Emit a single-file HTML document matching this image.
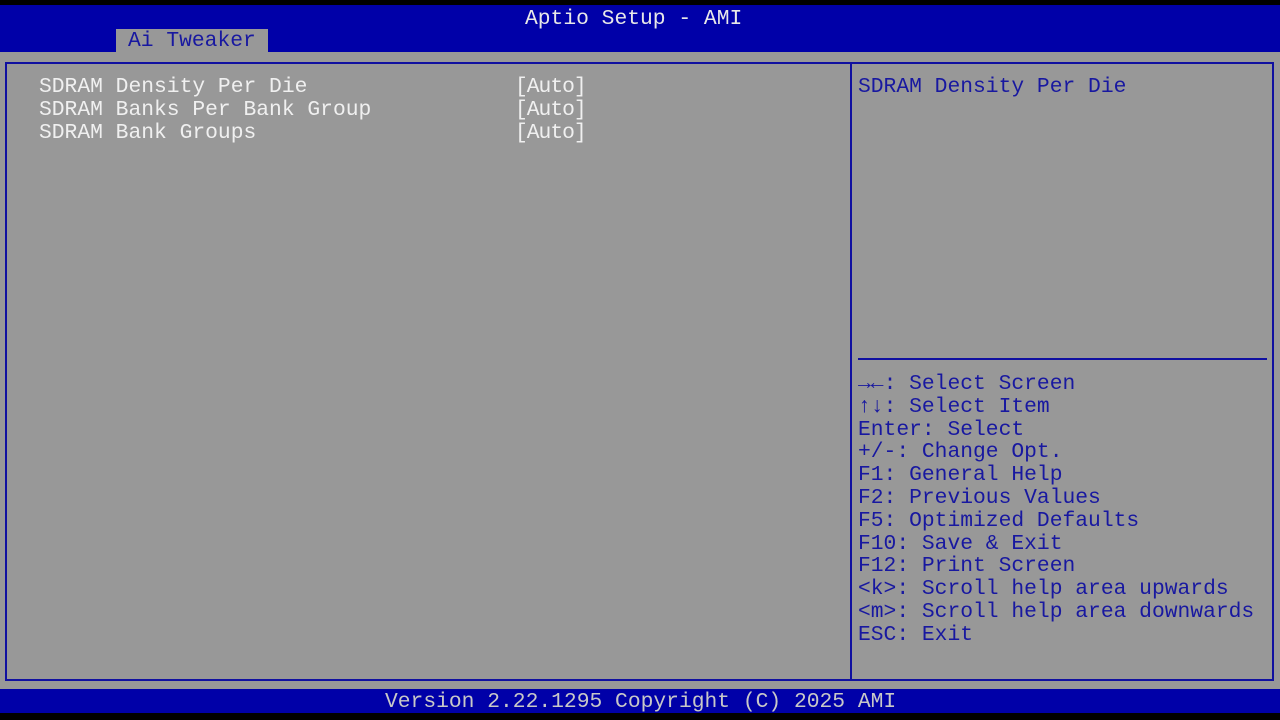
<!DOCTYPE html>
<html><head><style>
body{margin:0;width:1280px;height:720px;background:#989898;position:relative;overflow:hidden;font-family:"Liberation Mono","DejaVu Sans Mono",monospace;font-size:21.3px;}
div{position:absolute;}
.t{white-space:pre;line-height:23px;}
.w{color:#f0f0f0;}
.b{color:#1818a0;}
</style></head><body>
<div style="left:0;top:0;width:1280px;height:5px;background:#000"></div>
<div style="left:0;top:5px;width:1280px;height:47px;background:#0000a8"></div>
<div class="t w" style="left:525px;top:8px;color:#e8e8e8">Aptio Setup - AMI</div>
<div style="left:116px;top:29px;width:152px;height:23px;background:#989898"></div>
<div class="t b" style="left:128px;top:30px">Ai Tweaker</div>
<div style="left:5px;top:62px;width:1265px;height:615px;border:2px solid #1010a0;"></div>
<div style="left:850px;top:63px;width:2px;height:616px;background:#1010a0"></div>
<div style="left:858px;top:358px;width:409px;height:2px;background:#1010a0"></div>
<div class="t w" style="left:39px;top:76px">SDRAM Density Per Die
SDRAM Banks Per Bank Group
SDRAM Bank Groups</div>
<div class="t w" style="left:515px;top:76px;letter-spacing:-1px">[Auto]
[Auto]
[Auto]</div>
<div class="t b" style="left:858px;top:76px">SDRAM Density Per Die</div>
<div class="t b" style="left:858px;top:373px;line-height:22.8px"><b>→←</b>: Select Screen
<b>↑↓</b>: Select Item
Enter: Select
+/-: Change Opt.
F1: General Help
F2: Previous Values
F5: Optimized Defaults
F10: Save &amp; Exit
F12: Print Screen
&lt;k&gt;: Scroll help area upwards
&lt;m&gt;: Scroll help area downwards
ESC: Exit</div>
<div style="left:0;top:689px;width:1280px;height:24px;background:#0000a8"></div>
<div class="t" style="left:385px;top:691px;color:#c8c8c8">Version 2.22.1295 Copyright (C) 2025 AMI</div>
<div style="left:0;top:713px;width:1280px;height:7px;background:#000"></div>
</body></html>
